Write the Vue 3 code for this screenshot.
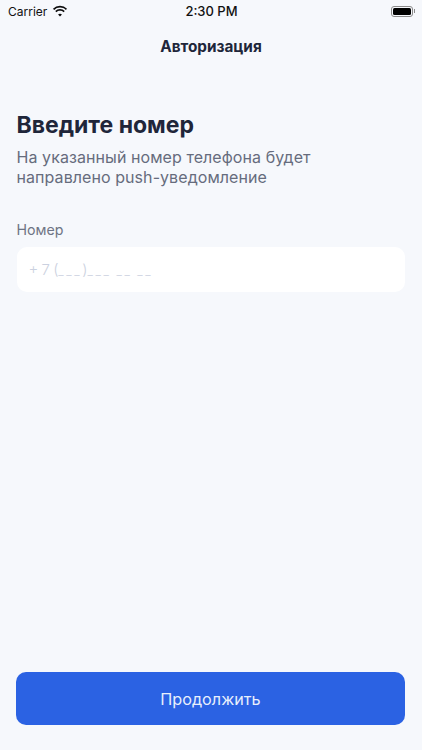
<script setup>
const title = 'Авторизация'
</script>

<template>
  <div class="screen">
    <div class="status">
      <div class="status-left">
        <span>Carrier</span>
        <svg class="wifi" width="16" height="12" viewBox="0 0 15 11">
          <path d="M7.5 2.3c2.1 0 4 .8 5.5 2.2l1.1-1.2A9.6 9.6 0 0 0 7.5.6 9.6 9.6 0 0 0 .9 3.3L2 4.5a8 8 0 0 1 5.5-2.2z" fill="#0b0b0b"/>
          <path d="M7.5 5.3c1.3 0 2.4.5 3.3 1.3l1.2-1.2a6.5 6.5 0 0 0-9 0l1.2 1.2c.9-.8 2-1.3 3.3-1.3z" fill="#0b0b0b"/>
          <path d="M7.5 8c-.7 0-1.3.3-1.8.7l1.8 1.9 1.8-1.9c-.5-.4-1.1-.7-1.8-.7z" fill="#0b0b0b"/>
        </svg>
      </div>
      <span class="time">2:30 PM</span>
      <div class="status-right">
        <div class="battery"><div class="battery-fill"></div></div>
        <div class="battery-cap"></div>
      </div>
    </div>
    <header class="nav">{{ title }}</header>
    <main class="content">
      <h1>Введите номер</h1>
      <p class="lead">На указанный номер телефона будет<br>направлено push-уведомление</p>
      <label class="label">Номер</label>
      <div class="field">+ 7 (<span class="blank">___</span>)<span class="blank">___ __ __</span></div>
    </main>
    <button class="cta">Продолжить</button>
  </div>
</template>

<style scoped>
.screen {
  width: 422px;
  height: 750px;
  background: #f6f8fc;
  display: flex;
  flex-direction: column;
  font-family: Inter, "Noto Sans", sans-serif;
  overflow: hidden;
}
.status {
  height: 22px;
  padding: 0 7px 0 8px;
  display: grid;
  grid-template-columns: 1fr auto 1fr;
  align-items: center;
  font-size: 13px;
  color: #111;
}
.status-left { display: flex; align-items: center; gap: 5px; font-size: 12px; }
.wifi { margin-top: -1px; }
.time { font-weight: 500; font-size: 13px; }
.status-right { display: flex; align-items: center; justify-content: flex-end; gap: 1px; }
.battery {
  width: 22px;
  height: 11px;
  border: 1px solid #8a8a8a;
  border-radius: 3px;
  padding: 1px;
  box-sizing: border-box;
}
.battery-fill { width: 100%; height: 100%; background: #000; border-radius: 1.5px; }
.battery-cap { width: 1px; height: 4px; background: #8a8a8a; }
.nav {
  margin-top: 16px;
  height: 18px;
  line-height: 18px;
  text-align: center;
  font-size: 15.3px;
  font-weight: 700;
  color: #20263a;
}
.content {
  flex: 1;
  padding: 0 17px 0 16.5px;
  display: flex;
  flex-direction: column;
}
h1 {
  margin: 54px 0 0;
  font-size: 23px;
  line-height: 30px;
  font-weight: 700;
  color: #20263a;
}
.lead {
  margin: 7px 0 0;
  font-size: 16px;
  letter-spacing: 0.07px;
  line-height: 20px;
  font-weight: 400;
  color: #666c7d;
}
.label {
  margin-top: 33px;
  font-size: 14.2px;
  line-height: 20px;
  color: #6e7484;
}
.field {
  margin-top: 7px;
  height: 45px;
  line-height: 46px;
  background: #fff;
  border-radius: 10px;
  padding: 0 12px;
  font-size: 15px;
  font-weight: 300;
  word-spacing: -1px;
  color: #cbd1e0;
}
.blank {
  font-size: 12px;
  letter-spacing: 2.6px;
  word-spacing: -1px;
}
.cta {
  margin: 0 17px 25px 16px;
  height: 53px;
  border: 0;
  border-radius: 10px;
  background: #2b62e3;
  color: #e8effc;
  font-family: inherit;
  font-size: 16.2px;
  font-weight: 400;
}
</style>
